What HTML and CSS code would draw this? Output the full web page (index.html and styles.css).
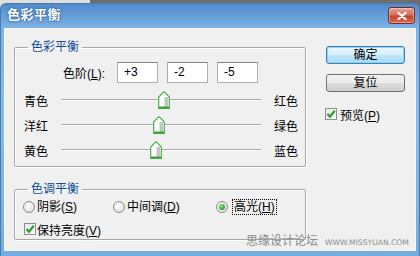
FILE: index.html
```html
<!DOCTYPE html>
<html>
<head>
<meta charset="utf-8">
<link rel="stylesheet" href="styles.css">
</head>
<body>
<div class="window">
  <div class="titlebar">
    <span class="title">色彩平衡</span>
    <span class="close"><svg width="10" height="8" viewBox="0 0 10 8"><path d="M1.5 1 L8.5 7 M8.5 1 L1.5 7" stroke="#fff" stroke-width="2.2" stroke-linecap="round"/></svg></span>
  </div>
  <div class="client">
    <div class="left">
      <fieldset class="group g1">
        <legend>色彩平衡</legend>
        <div class="levels">
          <span class="lbl">色阶(<u>L</u>):</span>
          <span class="input">+3</span>
          <span class="input">-2</span>
          <span class="input">-5</span>
        </div>
        <div class="srow">
          <span class="sl">青色</span>
          <div class="track"><span class="thumb" style="left:97px"><svg width="12" height="18" viewBox="0 0 12 18"><path d="M6 0.7 L11.3 6 V17.3 H0.7 V6 Z" fill="#fff" stroke="#46b046" stroke-width="1.2"/><rect x="6.5" y="6" width="3.5" height="10" fill="#c4c4c4"/><rect x="1" y="15.5" width="10" height="2" fill="#3aa43a"/></svg></span></div>
          <span class="sr">红色</span>
        </div>
        <div class="srow">
          <span class="sl">洋红</span>
          <div class="track"><span class="thumb" style="left:92px"><svg width="12" height="18" viewBox="0 0 12 18"><path d="M6 0.7 L11.3 6 V17.3 H0.7 V6 Z" fill="#fff" stroke="#46b046" stroke-width="1.2"/><rect x="6.5" y="6" width="3.5" height="10" fill="#c4c4c4"/><rect x="1" y="15.5" width="10" height="2" fill="#3aa43a"/></svg></span></div>
          <span class="sr">绿色</span>
        </div>
        <div class="srow">
          <span class="sl">黄色</span>
          <div class="track"><span class="thumb" style="left:89px"><svg width="12" height="18" viewBox="0 0 12 18"><path d="M6 0.7 L11.3 6 V17.3 H0.7 V6 Z" fill="#fff" stroke="#46b046" stroke-width="1.2"/><rect x="6.5" y="6" width="3.5" height="10" fill="#c4c4c4"/><rect x="1" y="15.5" width="10" height="2" fill="#3aa43a"/></svg></span></div>
          <span class="sr">蓝色</span>
        </div>
      </fieldset>
      <fieldset class="group g2">
        <legend>色调平衡</legend>
        <div class="radios">
          <span class="ritem w1"><span class="radio"></span><span class="rtext">阴影(<u>S</u>)</span></span>
          <span class="ritem w2"><span class="radio"></span><span class="rtext">中间调(<u>D</u>)</span></span>
          <span class="ritem"><span class="radio on"></span><span class="rtext focus">高光(<u>H</u>)</span></span>
        </div>
        <div class="chkrow">
          <span class="checkbox"><svg width="10" height="10" viewBox="0 0 10 10"><path d="M1.5 5 L4 7.8 L8.8 1.8" fill="none" stroke="#2e9e2e" stroke-width="2.2"/></svg></span>
          <span class="ctext">保持亮度(<u>V</u>)</span>
        </div>
      </fieldset>
    </div>
    <div class="right">
      <div class="btn default">确定</div>
      <div class="btn">复位</div>
      <div class="prev">
        <span class="checkbox"><svg width="10" height="10" viewBox="0 0 10 10"><path d="M1.5 5 L4 7.8 L8.8 1.8" fill="none" stroke="#2e9e2e" stroke-width="2.2"/></svg></span>
        <span class="ctext">预览(<u>P</u>)</span>
      </div>
    </div>
    <div class="watermark"><span class="wcn">思缘设计论坛</span><span class="wen">WWW.MISSYUAN.COM</span></div>
  </div>
</div>
</body>
</html>
```
FILE: styles.css
```css
* { box-sizing: border-box; }
html, body { margin: 0; padding: 0; }
body {
  width: 420px;
  height: 256px;
  overflow: hidden;
  background: linear-gradient(to right, #dedede 90px, #6e6e6e 90px);
  font-family: "Liberation Sans", "Noto Sans CJK SC", sans-serif;
  font-size: 12px;
  color: #000;
}
.window {
  margin-top: 3px;
  height: 253px;
  border-radius: 6px 6px 0 0;
  background: linear-gradient(#4f8bcd, #7eb3e5 25px, #86bbea 120px, #74abe0);
  display: flex;
  flex-direction: column;
  border: 1px solid #4a7cae;
  border-bottom: none;
}
.titlebar {
  height: 24px;
  display: flex;
  align-items: flex-start;
  padding: 0 4px 0 6px;
}
.title {
  color: #fff;
  font-weight: bold;
  font-size: 13px;
  line-height: 22px;
  text-shadow: 0 0 3px #2a5c93, 0 0 1px #2a5c93;
  letter-spacing: 0.5px;
}
.close {
  margin-left: auto;
  margin-top: 3px;
  width: 27px;
  height: 17px;
  border: 1px solid #7a2b20;
  border-radius: 3px;
  background: linear-gradient(#e9a393, #d6705d 45%, #c5432c 55%, #d46a55);
  display: flex;
  align-items: center;
  justify-content: center;
  box-shadow: inset 0 0 0 1px rgba(255,255,255,0.35);
}
.client {
  position: relative;
  margin: 0 3px 5px 3px;
  flex: 1;
  background: #f0f0f0;
  border: 1px solid #f8f8f8;
  display: flex;
  padding: 11px 0 0 9px;
}
.left { width: 292px; }
.group {
  margin: 0;
  padding: 0;
  border: 1px solid #a6a6a6;
  border-radius: 2px;
  box-shadow: inset 1px 1px 0 #fff, 1px 1px 0 #fff;
  min-width: 0;
}
.group legend {
  margin-left: 13px;
  padding: 0 3px;
  font-size: 12px;
  line-height: 14px;
  color: #0f4d9a;
}
.g1 { padding: 8px 0 3px 0; }
.levels {
  height: 21px;
  display: flex;
  align-items: center;
  padding-left: 48px;
}
.lbl { width: 54px; }
.input {
  width: 41px;
  height: 21px;
  margin-right: 9px;
  background: #fff;
  border: 1px solid #abadb3;
  border-top-color: #7d8288;
  padding-left: 6px;
  line-height: 19px;
}
.srow {
  height: 25px;
  display: flex;
  align-items: center;
  padding-left: 9px;
}
.levels + .srow { margin-top: 5px; }
.sl { width: 37px; }
.track {
  position: relative;
  width: 200px;
  height: 2px;
  margin-top: -1px;
  border-top: 1px solid #a9a9a9;
  border-bottom: 1px solid #ffffff;
}
.thumb {
  position: absolute;
  top: -9px;
  width: 12px;
  height: 18px;
  display: block;
}
.thumb svg { display: block; }
.sr { margin-left: 13px; }
.g2 {
  margin-top: 15px;
  padding: 3px 0 2px 0;
}
.radios {
  height: 16px;
  display: flex;
  align-items: center;
  padding-left: 8px;
}
.ritem { display: flex; align-items: center; }
.w1 { width: 90px; }
.w2 { width: 103px; }
.radio {
  width: 12px;
  height: 12px;
  border-radius: 50%;
  border: 1px solid #8b8b8b;
  background: radial-gradient(circle at 40% 40%, #ffffff, #e2e2e2 70%, #d0d0d0);
  margin-right: 2px;
  position: relative;
}
.radio.on::after {
  content: "";
  position: absolute;
  left: 2px;
  top: 2px;
  width: 6px;
  height: 6px;
  border-radius: 50%;
  background: radial-gradient(circle at 40% 35%, #8ee28e, #2f9d2f 70%, #1d7d1d);
}
.rtext { line-height: 16px; }
.rtext.focus {
  margin-left: 2px;
  border: 1px dotted #000;
  height: 16px;
  line-height: 14px;
  padding: 0 1px;
}
.chkrow {
  margin-top: 6px;
  height: 16px;
  display: flex;
  align-items: center;
  padding-left: 9px;
}
.checkbox {
  width: 12px;
  height: 12px;
  border: 1px solid #8e8f8f;
  background: linear-gradient(135deg, #e6e6e6, #ffffff);
  display: flex;
  align-items: center;
  justify-content: center;
  margin-right: 1px;
}
.checkbox svg { display: block; }
.right {
  width: 79px;
  margin-left: 20px;
  margin-top: 6px;
}
.btn {
  height: 18px;
  border: 1px solid #707070;
  border-radius: 3px;
  background: linear-gradient(#f3f3f3, #ebebeb 48%, #dddddd 52%, #cfcfcf);
  text-align: center;
  line-height: 16px;
}
.btn.default {
  border-color: #3c7fb1;
  box-shadow: inset 0 0 0 1px #8fd3f5;
  background: linear-gradient(#eaf6fd, #d9f0fc 48%, #bee6fd 52%, #a7d9f5);
}
.btn + .btn { margin-top: 10px; }
.prev {
  margin-top: 16px;
  margin-left: -1px;
  display: flex;
  align-items: center;
  height: 12px;
}
.prev .checkbox { margin-right: 3px; }
.watermark {
  position: absolute;
  left: 241px;
  top: 202px;
  display: flex;
  align-items: baseline;
  color: #8c8c8c;
  white-space: nowrap;
}
.wcn { font-size: 12px; }
.wen {
  margin-left: 7px;
  font-size: 7.6px;
  letter-spacing: 0;
  font-family: "DejaVu Sans", sans-serif;
}
```
